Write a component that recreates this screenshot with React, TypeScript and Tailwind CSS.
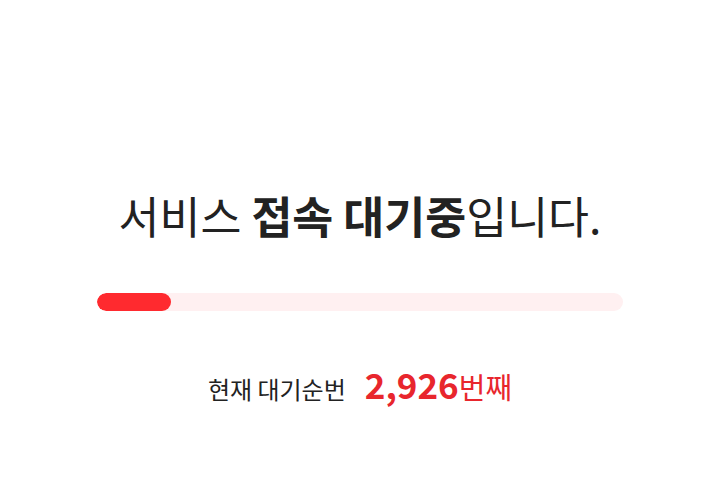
export default function App() {
  return (
    <div
      className="w-[720px] h-[489px] bg-white flex flex-col items-center"
      style={{ fontFamily: '"Noto Sans CJK KR", "Noto Sans", sans-serif' }}
    >
      <h1 className="mt-[185px] text-[44.5px] leading-[60px] text-[#222222]">
        서비스 <span className="font-bold">접속 대기중</span>입니다.
      </h1>
      <div className="mt-[48px] w-[526px] h-[18px] rounded-full bg-[#fff0f1] overflow-hidden">
        <div className="h-full w-[74px] rounded-full bg-[#ff2a2f]" />
      </div>
      <div className="mt-[53px] flex items-baseline">
        <span className="text-[24px] leading-[40px] text-[#222222]">현재 대기순번</span>
        <span className="ml-[19px] text-[35px] leading-[40px] font-bold text-[#e8262d]">2,926</span>
        <span className="text-[29px] leading-[40px] text-[#e8262d]">번째</span>
      </div>
    </div>
  );
}
